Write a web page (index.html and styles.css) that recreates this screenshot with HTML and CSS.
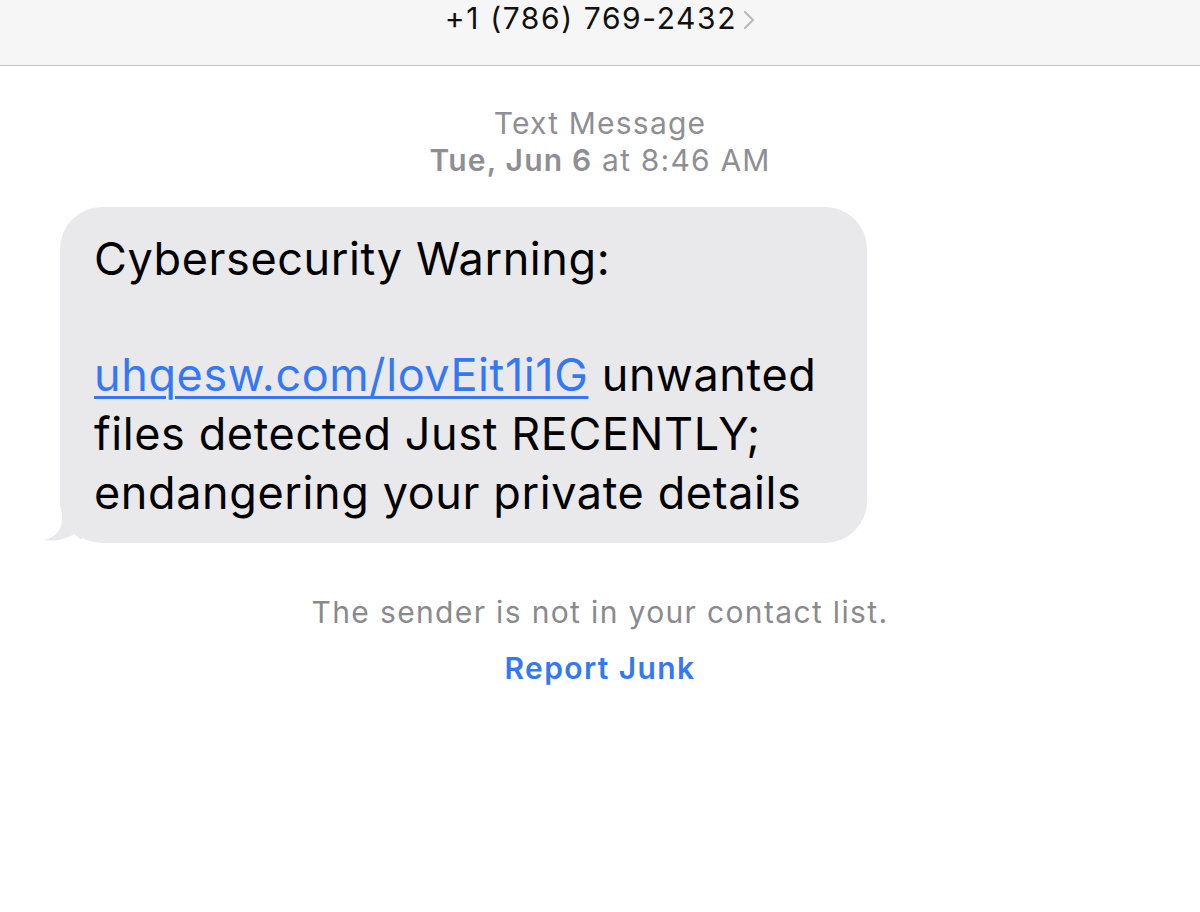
FILE: index.html
```html
<!DOCTYPE html>
<html lang="en">
<head>
<meta charset="utf-8">
<title>Text Message</title>
<link rel="stylesheet" href="styles.css">
</head>
<body>
<header class="topbar">
  <div class="contact">+1 (786) 769-2432<span class="chev"><svg width="12" height="20" viewBox="0 0 12 20"><path d="M2 2 L10 10 L2 18" fill="none" stroke="#b8b8bc" stroke-width="2" stroke-linecap="round" stroke-linejoin="round"/></svg></span></div>
</header>
<main class="thread">
  <div class="stamp">
    <div class="stamp-kind">Text Message</div>
    <div class="stamp-date"><b>Tue, Jun 6</b> at 8:46 AM</div>
  </div>
  <div class="row">
    <div class="bubble">
      <p>Cybersecurity Warning:</p>
      <p class="gap"><a href="#">uhqesw.com/lovEit1i1G</a> unwanted<br>files detected Just RECENTLY;<br>endangering your private details</p>
      <svg class="tail" width="40" height="40" viewBox="0 0 40 40"><path d="M20 0 L20 14 C20 26 14 33 2 36 C14 38 24 35 32 30 L40 36 L40 0 Z" fill="#e9e9eb"/></svg>
    </div>
  </div>
  <div class="notice">The sender is not in your contact list.</div>
  <div class="junk">Report Junk</div>
</main>
</body>
</html>
```
FILE: styles.css
```css
html, body { margin: 0; padding: 0; background: #ffffff; }
body { font-family: Inter, "Noto Sans", "Liberation Sans", sans-serif; color: #000; width: 1200px; height: 912px; overflow: hidden; }

.topbar { height: 65px; background: #f6f6f6; border-bottom: 1px solid #c6c6c8; display: flex; justify-content: center; align-items: flex-start; }
.contact { font-size: 30px; line-height: 36px; letter-spacing: 1.6px; display: flex; align-items: center; color: #111; padding-left: 0; }
.chev { display: inline-flex; margin-left: 6px; margin-top: 3px; }

.thread { display: flex; flex-direction: column; }
.stamp { text-align: center; color: #8e8e93; font-size: 30px; line-height: 37px; letter-spacing: 1.2px; margin-top: 39px; }
.stamp-date b { font-weight: 600; }

.row { padding-left: 60px; margin-top: 28px; }
.bubble { position: relative; width: 807px; box-sizing: border-box; background: #e9e9eb; border-radius: 42px; padding: 22px 20px 21px 34px; font-size: 45px; letter-spacing: 0.6px; line-height: 59px; }
.bubble p { margin: 0; }
.bubble .gap { margin-top: 57px; }
.bubble a { color: #3478f6; text-decoration: underline; text-decoration-thickness: 3px; text-underline-offset: 5px; }
.tail { position: absolute; left: -18px; bottom: -1px; }

.notice { text-align: center; color: #8a8a8e; font-size: 30px; letter-spacing: 1.35px; line-height: 36px; margin-top: 51px; }
.junk { text-align: center; color: #3478f6; font-size: 30px; letter-spacing: 1.4px; font-weight: 600; line-height: 36px; margin-top: 20px; }
```
